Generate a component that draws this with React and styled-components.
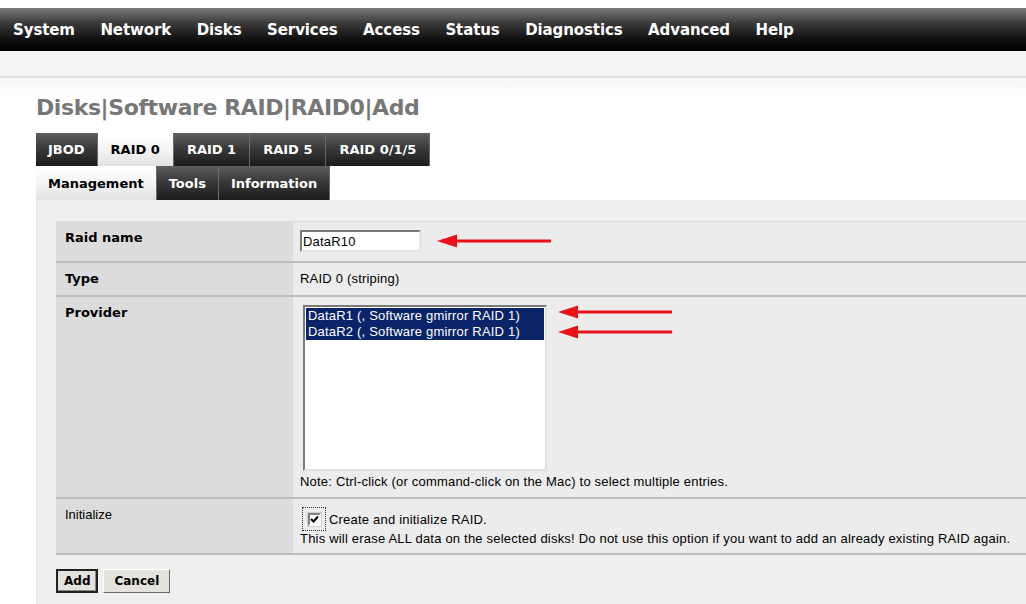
import React from 'react';
import styled, { createGlobalStyle } from 'styled-components';

const GlobalStyle = createGlobalStyle`
    body {
        margin: 0;
        background: #fff;
        font-family: "Liberation Sans", Arial, sans-serif;
        color: #000;
    }
`;

const NavBar = styled.div`
    margin-top: 8px;
    height: 43px;
    display: flex;
    align-items: center;
    gap: 25.5px;
    padding-left: 13px;
    background: linear-gradient(to bottom, #7a7a7a 0%, #3a3a3a 35%, #0e0e0e 75%, #000 100%);
`;

const NavItem = styled.span`
    font-family: "DejaVu Sans", Verdana, sans-serif;
    font-weight: bold;
    font-size: 15px;
    color: #fff;
    letter-spacing: -0.1px;
`;

const SubBar = styled.div`
    height: 25px;
    background: #f4f4f4;
    border-bottom: 2px solid #dedede;
`;

const Main = styled.div`
    padding-left: 36px;
    background: linear-gradient(to bottom, #f8f8f8 0, #fff 20px);
`;

const Title = styled.h1`
    margin: 0;
    padding: 17px 0 12px;
    font-family: "DejaVu Sans", Verdana, sans-serif;
    font-size: 22px;
    line-height: 26px;
    font-weight: bold;
    color: #777;
    letter-spacing: -0.4px;
`;

const TabRow = styled.div`
    display: flex;
`;

const Tab = styled.div`
    height: ${({ tall }) => (tall ? 34 : 33)}px;
    display: flex;
    align-items: center;
    padding: 0 ${({ pad }) => pad}px;
    font-family: "DejaVu Sans", Verdana, sans-serif;
    font-weight: bold;
    font-size: ${({ size }) => size}px;
    box-sizing: border-box;
    border-right: 1px solid #6a6a6a;
    color: ${({ active }) => (active ? '#000' : '#fff')};
    background: ${({ active }) =>
        active
            ? 'linear-gradient(to bottom, #ffffff 0%, #f4f4f4 50%, #e2e2e2 100%)'
            : 'linear-gradient(to bottom, #5e5e5e 0%, #3a3a3a 45%, #1c1c1c 100%)'};
`;

const Panel = styled.div`
    background: #efefef;
    border-left: 1px solid #e4e4e4;
    padding: 21px 0 12px 19px;
`;

const FormTable = styled.div`
    border-top: 1px solid #dadada;
`;

const Row = styled.div`
    display: grid;
    grid-template-columns: 237px 1fr;
    min-height: ${({ h }) => h}px;
    border-bottom: 2px solid #bdbdbd;
`;

const LabelCell = styled.div`
    background: #dcdcdc;
    padding: 8px 9px;
    font-family: "DejaVu Sans", Verdana, sans-serif;
    font-size: 13px;
    line-height: 16px;
    font-weight: ${({ plain }) => (plain ? 'normal' : 'bold')};
    ${({ plain }) => plain && 'font-family: "Liberation Sans", Arial, sans-serif;'}
`;

const ValueCell = styled.div`
    background: #ececec;
    padding: ${({ pt }) => pt ?? 8}px 7px ${({ pb }) => pb ?? 8}px;
    font-size: 13px;
    line-height: 15px;
    letter-spacing: 0.2px;
`;

const Inline = styled.div`
    display: flex;
    align-items: ${({ top }) => (top ? 'flex-start' : 'center')};
    gap: ${({ gap }) => gap}px;
`;

const TextInput = styled.div`
    width: 121px;
    height: 22px;
    box-sizing: border-box;
    background: #fff;
    border: 2px solid;
    border-color: #7a7a7a #e6e6e6 #e6e6e6 #7a7a7a;
    padding: 2px 1px;
    font-size: 13px;
    line-height: 15px;
`;

const ListBox = styled.div`
    margin-left: 3px;
    width: 244px;
    height: 166px;
    box-sizing: border-box;
    background: #fff;
    border: 2px solid;
    border-color: #7a7a7a #e0e0e0 #e0e0e0 #7a7a7a;
    padding: 1px 1px;
`;

const ListOption = styled.div`
    height: 16px;
    line-height: 16px;
    padding-left: 2px;
    font-size: 13px;
    background: ${({ selected }) => (selected ? '#0a246a' : 'transparent')};
    color: ${({ selected }) => (selected ? '#fff' : '#000')};
`;

const ArrowStack = styled.div`
    display: flex;
    flex-direction: column;
    gap: 6px;
`;

const Note = styled.div`
    margin-top: 3px;
`;

const CheckLine = styled.div`
    display: flex;
    align-items: center;
    gap: 3px;
`;

const FocusRing = styled.div`
    width: 24px;
    height: 24px;
    box-sizing: border-box;
    margin-left: 2px;
    border: 1px dotted #333;
    display: flex;
    align-items: center;
    justify-content: center;
`;

const CheckBox = styled.div`
    width: 13px;
    height: 13px;
    box-sizing: border-box;
    background: #fff;
    border: 2px solid;
    border-color: #808080 #fff #fff #808080;
    box-shadow: 0 0 0 1px #d4d0c8;
    display: flex;
    align-items: center;
    justify-content: center;
`;

const ButtonRow = styled.div`
    display: flex;
    gap: 5px;
    margin-top: 14px;
`;

const Button = styled.div`
    height: 24px;
    box-sizing: border-box;
    padding: 0 ${({ pad }) => pad}px;
    display: flex;
    align-items: center;
    background: #e4e2dc;
    font-family: "DejaVu Sans", Verdana, sans-serif;
    font-weight: bold;
    font-size: 12px;
    border: ${({ primary }) => (primary ? 2 : 1)}px solid;
    border-color: ${({ primary }) =>
        primary ? '#222 #222 #222 #222' : '#fff #6a6a6a #6a6a6a #fff'};
    box-shadow: ${({ primary }) => (primary ? 'inset -1px -1px 0 #888' : 'none')};
`;

const Arrow = () => (
    <svg width="116" height="14" viewBox="0 0 116 14">
        <line x1="16" y1="7" x2="114" y2="7" stroke="#e8141a" strokeWidth="3.2" />
        <polygon points="0,7 20,0.5 20,13.5" fill="#e8141a" />
    </svg>
);

const Tick = () => (
    <svg width="9" height="9" viewBox="0 0 9 9">
        <path d="M1 4 L3.5 6.5 L8 1.5" fill="none" stroke="#000" strokeWidth="2" />
    </svg>
);

const navItems = ['System', 'Network', 'Disks', 'Services', 'Access', 'Status', 'Diagnostics', 'Advanced', 'Help'];

const raidTabs = [
    { label: 'JBOD', pad: 12 },
    { label: 'RAID 0', pad: 13, active: true },
    { label: 'RAID 1', pad: 13 },
    { label: 'RAID 5', pad: 13 },
    { label: 'RAID 0/1/5', pad: 13 },
];

const pageTabs = [
    { label: 'Management', pad: 12, active: true },
    { label: 'Tools', pad: 12 },
    { label: 'Information', pad: 12 },
];

const providers = [
    'DataR1 (, Software gmirror RAID 1)',
    'DataR2 (, Software gmirror RAID 1)',
];

const App = () => {
    return (
        <>
            <GlobalStyle />
            <NavBar>
                {navItems.map((item) => (
                    <NavItem key={item}>{item}</NavItem>
                ))}
            </NavBar>
            <SubBar />
            <Main>
                <Title>Disks|Software RAID|RAID0|Add</Title>
                <TabRow>
                    {raidTabs.map((t) => (
                        <Tab key={t.label} pad={t.pad} size={13} active={t.active}>
                            {t.label}
                        </Tab>
                    ))}
                </TabRow>
                <TabRow>
                    {pageTabs.map((t) => (
                        <Tab key={t.label} pad={t.pad} size={13} tall active={t.active}>
                            {t.label}
                        </Tab>
                    ))}
                </TabRow>
                <Panel>
                    <FormTable>
                        <Row h={39}>
                            <LabelCell>Raid name</LabelCell>
                            <ValueCell>
                                <Inline gap={16}>
                                    <TextInput>DataR10</TextInput>
                                    <Arrow />
                                </Inline>
                            </ValueCell>
                        </Row>
                        <Row h={31}>
                            <LabelCell>Type</LabelCell>
                            <ValueCell>RAID 0 (striping)</ValueCell>
                        </Row>
                        <Row h={200}>
                            <LabelCell>Provider</LabelCell>
                            <ValueCell>
                                <Inline top gap={11}>
                                    <ListBox>
                                        {providers.map((p) => (
                                            <ListOption key={p} selected>
                                                {p}
                                            </ListOption>
                                        ))}
                                    </ListBox>
                                    <ArrowStack>
                                        <Arrow />
                                        <Arrow />
                                    </ArrowStack>
                                </Inline>
                                <Note>Note: Ctrl-click (or command-click on the Mac) to select multiple entries.</Note>
                            </ValueCell>
                        </Row>
                        <Row h={54}>
                            <LabelCell plain>Initialize</LabelCell>
                            <ValueCell pt={8} pb={7}>
                                <CheckLine>
                                    <FocusRing>
                                        <CheckBox>
                                            <Tick />
                                        </CheckBox>
                                    </FocusRing>
                                    <span>Create and initialize RAID.</span>
                                </CheckLine>
                                <div>
                                    This will erase ALL data on the selected disks! Do not use this option if you want to add an already existing RAID again.
                                </div>
                            </ValueCell>
                        </Row>
                    </FormTable>
                    <ButtonRow>
                        <Button primary pad={6}>Add</Button>
                        <Button pad={10}>Cancel</Button>
                    </ButtonRow>
                </Panel>
            </Main>
        </>
    );
};

export default App;
